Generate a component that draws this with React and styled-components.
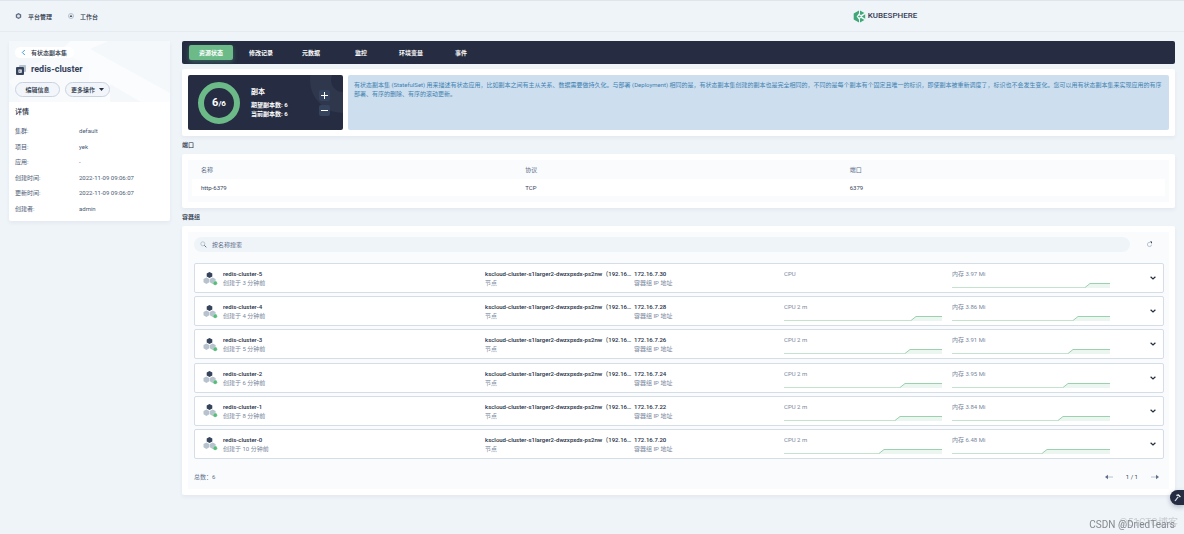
import React from "react";
import styled, { createGlobalStyle } from "styled-components";

const GlobalStyle = createGlobalStyle`
  * { box-sizing: border-box; }
  body {
    margin: 0;
    min-height: 100vh;
    background: #eff4f9;
    color: #242e42;
    font: 400 6px/9px Roboto, "Noto Sans CJK SC", sans-serif;
  }
  button, input { font: inherit; color: inherit; margin: 0; padding: 0; border: 0; background: none; }
  button { cursor: pointer; }
  h1, h2, p, dl, dd, ul { margin: 0; padding: 0; }
  a { color: inherit; text-decoration: none; }
  svg { display: block; flex: none; }
`;

const Header = styled.header`
  display: grid;
  grid-template-columns: 1fr 1fr;
  align-items: center;
  height: 32px;
  padding-right: 4px;
  border-top: 1px solid #dfe5ec;
  border-bottom: 1px solid #e6ebf2;
`;

const TopNav = styled.nav`
  display: flex;
  gap: 15px;
  padding-left: 14px;
`;

const TopLink = styled.a`
  display: flex;
  align-items: center;
  gap: 5px;
  font-weight: 500;
`;

const Logo = styled.a`
  justify-self: center;
  display: flex;
  align-items: center;
  gap: 2px;
  color: #363b55;
  font-size: 8px;
  line-height: 12px;
  font-weight: 500;
`;

const Page = styled.div`
  display: grid;
  grid-template-columns: 161px minmax(0, 1fr);
  align-items: start;
  gap: 12px;
  padding: 9px 9px 39px;
`;

const Card = styled.section`
  background: #fff;
  border-radius: 2px;
  box-shadow: 0 2px 4px rgba(36, 46, 66, 0.06);
  padding: ${(p) => (p.$flush ? "0" : "6px")};
  overflow: hidden;
`;

const Summary = styled.div`
  position: relative;
  padding: 6px 6px 5px;
  background: #f5f8fb;
`;

const SummaryArt = styled.svg`
  position: absolute;
  inset: 0;
  width: 100%;
  height: 100%;
`;

const SummaryBody = styled.div`
  position: relative;
  display: flex;
  flex-direction: column;
  align-items: flex-start;
`;

const BackLink = styled.a`
  display: flex;
  align-items: center;
  gap: 5px;
  height: 11px;
  padding: 0 7px 0 6px;
  border-radius: 6px;
  background: #fff;
  font-weight: 500;
`;

const Title = styled.h1`
  display: flex;
  align-items: center;
  gap: 5px;
  margin: 6px 0 7px;
  padding-left: 1px;
  font-size: 9px;
  line-height: 11px;
  font-weight: 700;
  color: #36435c;
`;

const Actions = styled.div`
  display: flex;
  gap: 5px;
`;

const PillButton = styled.button`
  display: flex;
  align-items: center;
  justify-content: center;
  gap: 4px;
  width: 45px;
  height: 15px;
  border: 1px solid #c9d3df;
  border-radius: 8px;
  background: #f2f6fa;
  font-weight: 500;
`;

const Details = styled.div`
  padding: 5px 6px;
`;

const DetailsTitle = styled.h2`
  font-size: 7px;
  line-height: 10px;
  font-weight: 500;
`;

const DetailList = styled.dl`
  display: grid;
  grid-template-columns: 64px 1fr;
  grid-auto-rows: 1fr;
  align-items: center;
  min-height: 93px;
  margin-top: 6px;
  color: #4a5974;
`;

const Tabs = styled.nav`
  display: flex;
  gap: 6px;
  padding: 4px 7px;
  margin-bottom: 5px;
  border-radius: 2px;
  background: #262d42;
`;

const Tab = styled.button`
  width: 44px;
  height: 15px;
  border-radius: 2px;
  color: #fff;
  font-weight: 700;
  background: ${(p) => (p.$active ? "#6bba88" : "transparent")};
  box-shadow: ${(p) => (p.$active ? "0 2px 5px rgba(85, 188, 138, 0.35)" : "none")};
`;

const StatusRow = styled.div`
  display: grid;
  grid-template-columns: 155px minmax(0, 1fr);
  gap: 5px;
`;

const Replicas = styled.div`
  position: relative;
  display: flex;
  align-items: center;
  height: 55px;
  padding: 0 13px 0 10px;
  border-radius: 2px;
  background: #262d42;
  color: #fff;
  overflow: hidden;
`;

const GhostRing = styled.span`
  position: absolute;
  top: -28px;
  right: -33px;
  width: 66px;
  height: 66px;
  border: 21px solid #2f374c;
  border-radius: 50%;
`;

const Ring = styled.div`
  display: flex;
  align-items: center;
  justify-content: center;
  width: 42px;
  height: 42px;
  border: 6px solid #6bba88;
  border-radius: 50%;
  font-size: 8px;
  font-weight: 700;
`;

const RingCount = styled.span`
  font-size: 11px;
`;

const ReplicaText = styled.div`
  flex: 1;
  padding-left: 11px;
  font-weight: 700;
`;

const ReplicaTitle = styled.h2`
  font-size: 7px;
  line-height: 10px;
  margin-bottom: 3px;
`;

const Stepper = styled.div`
  position: relative;
  display: flex;
  flex-direction: column;
  gap: 4px;
`;

const StepButton = styled.button`
  display: flex;
  align-items: center;
  justify-content: center;
  width: 11px;
  height: 11px;
  border-radius: 2px;
  background: #36435c;
`;

const Notice = styled.p`
  padding: 5px 6px;
  border-radius: 2px;
  background: #cddeef;
  color: #3f82b0;
`;

const SectionTitle = styled.h2`
  font-size: 6px;
  line-height: 18px;
  font-weight: 500;
`;

const Inset = styled.div`
  background: #f9fbfd;
  padding: ${(p) => (p.$table ? "0 4px 6px" : "5px 5px 6px 6px")};
`;

const Table = styled.table`
  width: 100%;
  border-collapse: collapse;
  table-layout: fixed;
  text-align: left;
  th { height: 19px; padding: 0 9px; font-weight: 400; color: #5f708a; }
  td { height: 17px; padding: 0 9px; background: #fff; color: #36435c; }
`;

const Toolbar = styled.div`
  display: flex;
  align-items: center;
  gap: 15px;
  padding-right: 11px;
  margin-bottom: 11px;
`;

const SearchBox = styled.label`
  display: flex;
  align-items: center;
  flex: 1;
  gap: 5px;
  height: 15px;
  padding: 0 6px;
  border-radius: 8px;
  background: #eff4f9;
  color: #79879c;
`;

const SearchInput = styled.input`
  flex: 1;
  outline: none;
  &::placeholder { color: #5f708a; opacity: 1; }
`;

const IconButton = styled.button`
  display: flex;
  align-items: center;
  justify-content: center;
  width: 8px;
  height: 8px;
  color: #242e42;
`;

const PodList = styled.ul`
  display: flex;
  flex-direction: column;
  justify-content: space-between;
  min-height: 196px;
  list-style: none;
`;

const Pod = styled.li`
  display: grid;
  grid-template-columns: 28px 262fr 149fr 150fr 168fr 168fr 43fr;
  height: 30px;
  border: 1px solid #d5dde7;
  border-radius: 2px;
  background: #fff;
`;

const PodIcon = styled.div`
  display: flex;
  align-items: center;
  padding-left: 8px;
`;

const PodCell = styled.div`
  min-width: 0;
  padding: 5px ${(p) => (p.$chart ? "10px" : "2px")} 0 0;
  color: #79879c;
`;

const Strong = styled.div`
  overflow: hidden;
  text-overflow: ellipsis;
  white-space: nowrap;
  font-weight: 500;
  color: #242e42;
`;

const Chart = styled.svg`
  width: 100%;
  height: 7px;
  margin-top: 4px;
`;

const Expand = styled(IconButton)`
  align-self: center;
  justify-self: end;
  margin-right: 6px;
`;

const Footer = styled.div`
  display: flex;
  justify-content: space-between;
  align-items: center;
  padding: 13px 5px 2px 0;
  color: #5f708a;
`;

const Pager = styled.div`
  display: flex;
  align-items: center;
  gap: 13px;
  color: #36435c;
`;

const ToolButton = styled.button`
  position: fixed;
  right: 0;
  bottom: 29px;
  display: flex;
  align-items: center;
  width: 14px;
  height: 15px;
  padding-left: 4px;
  border-radius: 8px 0 0 8px;
  background: #262d42;
  color: #fff;
  box-shadow: 0 2px 5px rgba(36, 46, 66, 0.3);
`;

const Watermark = styled.div`
  position: fixed;
  right: ${(p) => (p.$faint ? "6px" : "9px")};
  bottom: ${(p) => (p.$faint ? "5px" : "3px")};
  color: ${(p) => (p.$faint ? "#c9cdd2" : "#85898f")};
  font-size: 10px;
  line-height: 13px;
`;

const details = [
  ["集群:", "default"],
  ["项目:", "yek"],
  ["应用:", "-"],
  ["创建时间:", "2022-11-09 09:06:07"],
  ["更新时间:", "2022-11-09 09:06:07"],
  ["创建者:", "admin"],
];

const tabs = ["资源状态", "修改记录", "元数据", "监控", "环境变量", "事件"];

const pods = [
  { id: 5, age: 3, ip: "172.16.7.30", cpu: "CPU", mem: "3.97", cpuRise: null, memRise: 133 },
  { id: 4, age: 4, ip: "172.16.7.28", cpu: "CPU 2 m", mem: "3.86", cpuRise: 127, memRise: 121 },
  { id: 3, age: 5, ip: "172.16.7.26", cpu: "CPU 2 m", mem: "3.91", cpuRise: 121, memRise: 116 },
  { id: 2, age: 6, ip: "172.16.7.24", cpu: "CPU 2 m", mem: "3.95", cpuRise: 116, memRise: 111 },
  { id: 1, age: 8, ip: "172.16.7.22", cpu: "CPU 2 m", mem: "3.84", cpuRise: 111, memRise: 106 },
  { id: 0, age: 10, ip: "172.16.7.20", cpu: "CPU 2 m", mem: "6.48", cpuRise: 95, memRise: 90 },
];

function Sparkline({ rise }) {
  const line = `M${rise} 5.5 L${rise + 5} 1.5 H158`;
  return (
    <Chart viewBox="0 0 158 7" preserveAspectRatio="none" aria-hidden="true">
      <path d={`${line} V6 H${rise} Z`} fill="#eaf6ef" />
      <path d={`M0 5.5 H${rise}`} stroke="#c3e3cf" fill="none" />
      <path d={line} stroke="#9bd1af" fill="none" />
    </Chart>
  );
}

function PodGlyph() {
  return (
    <svg width="15" height="15" viewBox="0 0 15 15" aria-hidden="true">
      <path d="M6.5 1 L9.3 2.4 V5.5 L6.5 7.1 L3.7 5.5 V2.4 Z" fill="#36435c" />
      <path d="M3.4 6.6 L6.3 8.1 V11.3 L3.4 12.9 L.5 11.3 V8.1 Z M9.7 6.6 L12.6 8.1 V11.3 L9.7 12.9 L6.8 11.3 V8.1 Z" fill="#b6c2cd" />
      <circle cx="12.2" cy="12.2" r="2.1" fill="#55bc7a" stroke="#fff" strokeWidth=".3" />
    </svg>
  );
}

function Arrow({ flip }) {
  return (
    <svg width="8" height="6" viewBox="0 0 8 6" aria-hidden="true">
      <g transform={flip ? "translate(8 0) scale(-1 1)" : undefined}>
        <path d="M2 3 H8" stroke="#b6c2cd" />
        <path d="M0 3 L3 .8 V5.2 Z" fill="#5f708a" />
      </g>
    </svg>
  );
}

export default function App() {
  return (
    <>
      <GlobalStyle />
      <Header>
        <TopNav>
          <TopLink href="#platform">
            <svg width="9" height="8" viewBox="0 0 9 8" aria-hidden="true">
              <path d="M4.5 .9 L7.2 2.4 V5.6 L4.5 7.1 L1.8 5.6 V2.4 Z" fill="#5f6b80" />
              <circle cx="4.5" cy="4" r="1.5" fill="#e3e8ee" />
            </svg>
            平台管理
          </TopLink>
          <TopLink href="#workbench">
            <svg width="8" height="8" viewBox="0 0 8 8" aria-hidden="true">
              <circle cx="4" cy="4" r="2.5" fill="#eff4f9" stroke="#b6c2cd" />
              <path d="M4 2.5 L5.4 5 H2.6 Z" fill="#4a5974" />
            </svg>
            工作台
          </TopLink>
        </TopNav>
        <Logo href="#home">
          <svg width="13" height="13" viewBox="0 0 13 13" aria-hidden="true">
            <path d="M6 .4 L.7 3.4 V9.6 L6 12.6 V9.8 L3.6 6.5 L6 3.2 Z" fill="#3fa877" />
            <path d="M7 .5 L11.4 3 L8 5.1 L7 4.5 Z M7 12.5 L11.4 10 L8 7.9 L7 8.5 Z M12.2 4.2 V8.8 L8.7 6.5 Z M4.8 6.5 L6.5 5.5 L7.9 6.5 L6.5 7.5 Z" fill="#3fa877" />
          </svg>
          KUBESPHERE
        </Logo>
      </Header>

      <Page>
        <Card as="aside" $flush>
          <Summary>
            <SummaryArt viewBox="0 0 161 61" preserveAspectRatio="none" aria-hidden="true">
              <path d="M62 0 H99 L81 8 L161 52 V61 H132 L101 43 V61 H80 V27 L50 10 Z" fill="#fafcfd" />
              <path d="M0 40 L50 8 L80 27 V61 H12 Z" fill="#f8fafc" />
            </SummaryArt>
            <SummaryBody>
              <BackLink href="#statefulsets">
                <svg width="5" height="7" viewBox="0 0 5 7" aria-hidden="true">
                  <path d="M3.8 1 L1.3 3.5 L3.8 6" stroke="#3f9bd0" fill="none" />
                </svg>
                有状态副本集
              </BackLink>
              <Title>
                <svg width="10" height="10" viewBox="0 0 10 10" aria-hidden="true">
                  <rect x="3" width="7" height="7" rx="1" fill="#b6c2cd" />
                  <rect y="2" width="8" height="8" rx="1" fill="#36435c" />
                  <path d="M2.5 4.5 H5.7 V7.7 H2.5 Z" fill="#fff" />
                  <path d="M3.4 5.2 L5 6.1 L3.4 7 Z" fill="#36435c" />
                </svg>
                redis-cluster
              </Title>
              <Actions>
                <PillButton type="button">编辑信息</PillButton>
                <PillButton type="button">
                  更多操作
                  <svg width="5" height="3" viewBox="0 0 5 3" aria-hidden="true">
                    <path d="M0 0 H5 L2.5 3 Z" fill="#242e42" />
                  </svg>
                </PillButton>
              </Actions>
            </SummaryBody>
          </Summary>
          <Details>
            <DetailsTitle>详情</DetailsTitle>
            <DetailList>
              {details.map(([label, value]) => (
                <React.Fragment key={label}>
                  <dt>{label}</dt>
                  <dd>{value}</dd>
                </React.Fragment>
              ))}
            </DetailList>
          </Details>
        </Card>

        <main>
          <Tabs>
            {tabs.map((name, i) => (
              <Tab key={name} type="button" $active={i === 0}>{name}</Tab>
            ))}
          </Tabs>

          <Card>
            <StatusRow>
              <Replicas>
                <GhostRing />
                <Ring><span><RingCount>6</RingCount>/6</span></Ring>
                <ReplicaText>
                  <ReplicaTitle>副本</ReplicaTitle>
                  <p>期望副本数: 6</p>
                  <p>当前副本数: 6</p>
                </ReplicaText>
                <Stepper>
                  <StepButton type="button" aria-label="增加">
                    <svg width="7" height="7" viewBox="0 0 7 7"><path d="M3.5 0 V7 M0 3.5 H7" stroke="#fff" /></svg>
                  </StepButton>
                  <StepButton type="button" aria-label="减少">
                    <svg width="7" height="7" viewBox="0 0 7 7"><path d="M0 3.5 H7" stroke="#fff" /></svg>
                  </StepButton>
                </Stepper>
              </Replicas>
              <Notice>
                有状态副本集 (StatefulSet) 用来描述有状态应用，比如副本之间有主从关系、数据需要做持久化。与部署 (Deployment) 相同的是，有状态副本集创建的副本也是完全相同的，不同的是每个副本有个固定且唯一的标识，即使副本被重新调度了，标识也不会发生变化。您可以用有状态副本集来实现应用的有序部署、有序的删除、有序的滚动更新。
              </Notice>
            </StatusRow>
          </Card>

          <SectionTitle>端口</SectionTitle>
          <Card>
            <Inset $table>
              <Table>
                <thead>
                  <tr><th>名称</th><th>协议</th><th>端口</th></tr>
                </thead>
                <tbody>
                  <tr><td>http-6379</td><td>TCP</td><td>6379</td></tr>
                </tbody>
              </Table>
            </Inset>
          </Card>

          <SectionTitle>容器组</SectionTitle>
          <Card>
            <Inset>
              <Toolbar>
                <SearchBox>
                  <svg width="7" height="7" viewBox="0 0 7 7" aria-hidden="true">
                    <circle cx="2.8" cy="2.8" r="2" fill="none" stroke="#b0bccb" strokeWidth=".8" />
                    <path d="M4.3 4.3 L6.3 6.3" stroke="#5f708a" />
                  </svg>
                  <SearchInput type="text" placeholder="按名称搜索" aria-label="按名称搜索" />
                </SearchBox>
                <IconButton type="button" aria-label="刷新">
                  <svg width="7" height="7" viewBox="0 0 7 7">
                    <path d="M5.6 3.6 A2.1 2.1 0 1 1 4 1.4" fill="none" stroke="#a8b4c4" strokeWidth=".8" />
                    <path d="M3.8 .6 H6 V2.8 Z" fill="#36435c" />
                  </svg>
                </IconButton>
              </Toolbar>
              <PodList>
                {pods.map((pod) => (
                  <Pod key={pod.id}>
                    <PodIcon><PodGlyph /></PodIcon>
                    <PodCell>
                      <Strong>redis-cluster-{pod.id}</Strong>
                      创建于 {pod.age} 分钟前
                    </PodCell>
                    <PodCell>
                      <Strong>kscloud-cluster-s1larger2-dwzxpxdx-ps2nw（192.16…</Strong>
                      节点
                    </PodCell>
                    <PodCell>
                      <Strong>{pod.ip}</Strong>
                      容器组 IP 地址
                    </PodCell>
                    <PodCell $chart>
                      {pod.cpu}
                      {pod.cpuRise !== null && <Sparkline rise={pod.cpuRise} />}
                    </PodCell>
                    <PodCell $chart>
                      内存 {pod.mem} Mi
                      <Sparkline rise={pod.memRise} />
                    </PodCell>
                    <Expand type="button" aria-label="展开">
                      <svg width="6" height="4" viewBox="0 0 6 4">
                        <path d="M.6 .7 L3 3 L5.4 .7" fill="none" stroke="#242e42" strokeWidth="1.2" />
                      </svg>
                    </Expand>
                  </Pod>
                ))}
              </PodList>
              <Footer>
                <span>总数：6</span>
                <Pager>
                  <IconButton type="button" aria-label="上一页"><Arrow /></IconButton>
                  <span>1 / 1</span>
                  <IconButton type="button" aria-label="下一页"><Arrow flip /></IconButton>
                </Pager>
              </Footer>
            </Inset>
          </Card>
        </main>
      </Page>

      <ToolButton type="button" aria-label="工具箱">
        <svg width="7" height="8" viewBox="0 0 7 8">
          <path d="M1 7 L4.2 2.8" stroke="#d5dde7" strokeWidth="1.2" />
          <path d="M2.4 1.4 L4.4 1 L6.4 3" fill="none" stroke="#fff" strokeWidth="1.2" />
        </svg>
      </ToolButton>
      <Watermark $faint>@51CTO博客</Watermark>
      <Watermark>CSDN @DriedTears</Watermark>
    </>
  );
}
